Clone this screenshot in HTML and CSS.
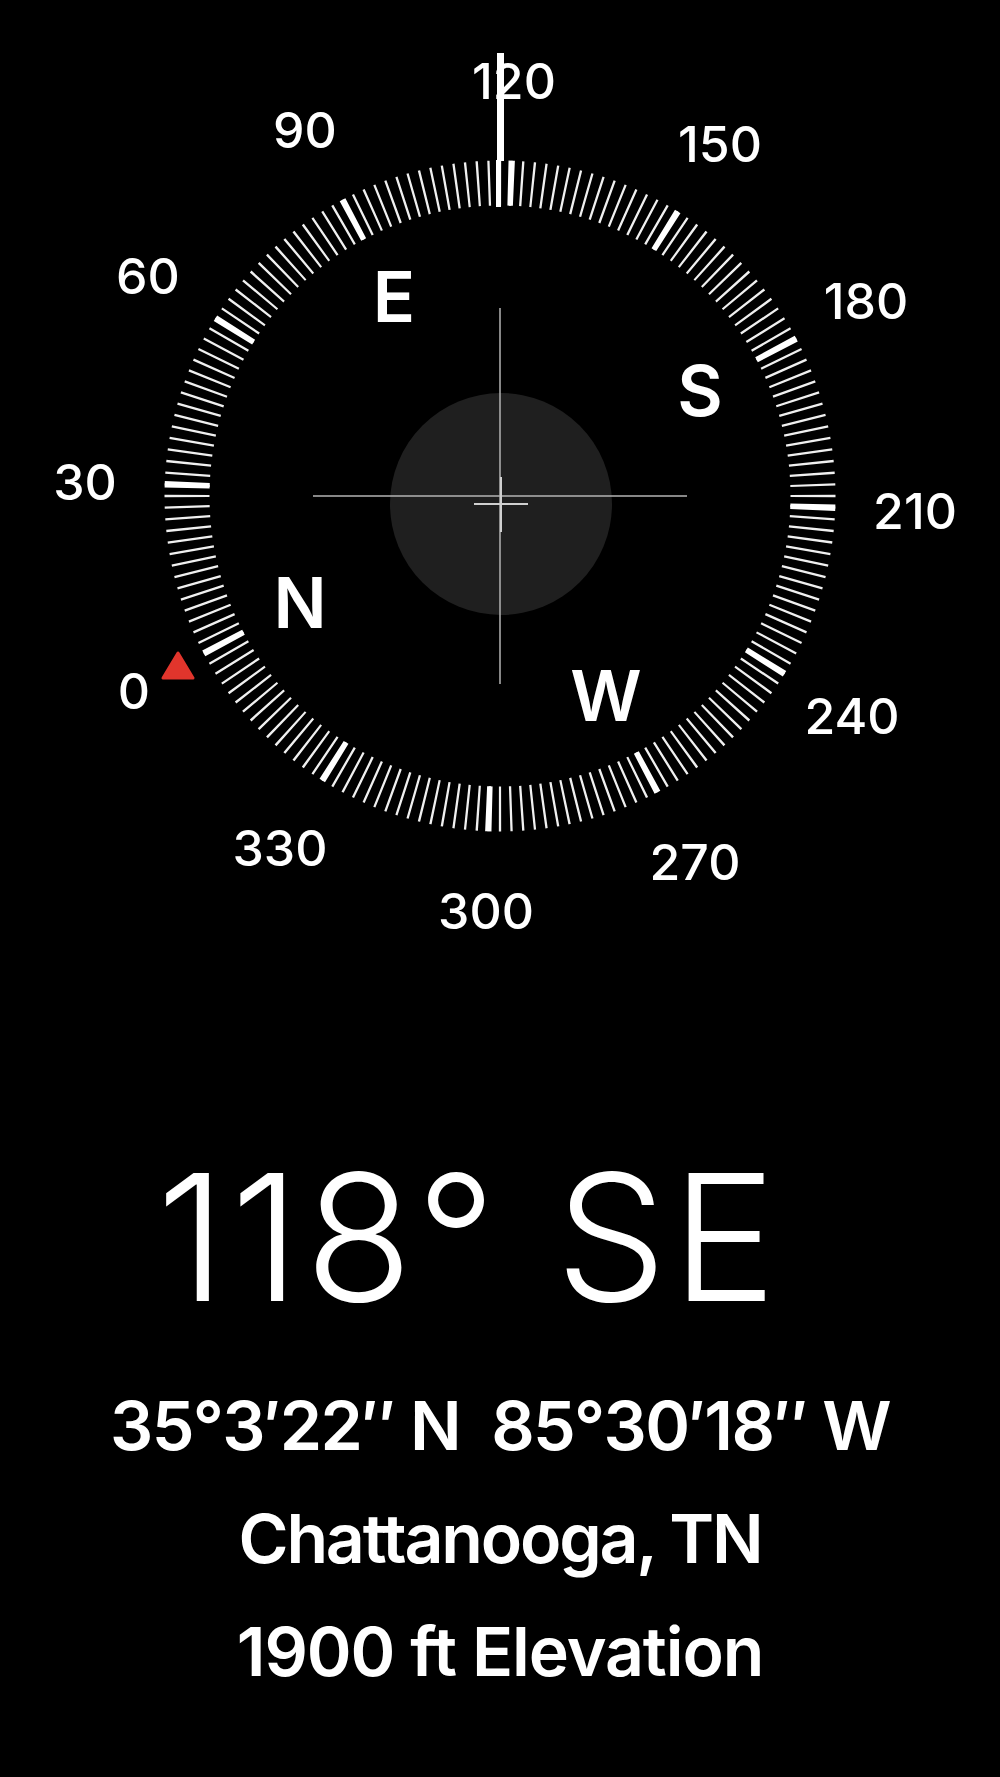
FILE: index.html
```html
<!DOCTYPE html>
<html>

<head>
    <meta charset="UTF-8">
    <meta name="viewport" content="width=device-width, initial-scale=1.0">
    <title>Compass</title>
    <link rel="stylesheet" href="styles.css">
</head>

<body>
    <main class="compass">
        <svg class="dial" width="1000" height="960" viewBox="0 0 1000 960">
            <!-- level bubble -->
            <circle class="bubble" cx="501" cy="504" r="111"></circle>

            <!-- tick ring: 2deg minor, 30deg major (dial turned to 118deg) -->
            <circle class="ticks-minor" cx="500" cy="496" r="313" pathLength="360"></circle>
            <circle class="ticks-major" cx="500" cy="496" r="313" pathLength="360" transform="rotate(2 500 496)"></circle>

            <!-- crosshair -->
            <line class="cross" x1="313" y1="496" x2="687" y2="496"></line>
            <line class="cross" x1="500" y1="308" x2="500" y2="684"></line>
            <line class="cross-small" x1="474" y1="504" x2="528" y2="504"></line>
            <line class="cross-small" x1="501" y1="477" x2="501" y2="532"></line>

            <!-- degree labels -->
            <g class="degrees">
                <text x="134" y="709">0</text>
                <text x="85" y="500">30</text>
                <text x="148" y="294">60</text>
                <text x="305" y="148">90</text>
                <text x="514" y="99">120</text>
                <text x="720" y="162">150</text>
                <text x="866" y="319">180</text>
                <text x="915" y="529">210</text>
                <text x="852" y="734">240</text>
                <text x="695" y="880">270</text>
                <text x="486" y="929">300</text>
                <text x="280" y="866">330</text>
            </g>

            <!-- cardinal points -->
            <g class="cardinals">
                <text x="300" y="628">N</text>
                <text x="394" y="322">E</text>
                <text x="700" y="416">S</text>
                <text x="606" y="721">W</text>
            </g>

            <!-- north marker -->
            <polygon class="north" points="178,653 163,678 193,678"></polygon>

            <!-- fixed heading indicator -->
            <rect class="indicator" x="497" y="53" width="7" height="108"></rect>
            <rect class="indicator" x="496" y="160" width="5" height="47"></rect>
        </svg>

        <section class="readout">
            <div class="heading">118° SE</div>
            <div class="coords">35°3′22″ N&nbsp;&nbsp;85°30′18″ W</div>
            <div class="place">Chattanooga, TN</div>
            <div class="elevation">1900 ft Elevation</div>
        </section>
    </main>
</body>

</html>
```

FILE: styles.css
```css
* {
    margin: 0;
    padding: 0;
}

body {
    background: #000;
    color: #fff;
    font-family: Inter, "Liberation Sans", sans-serif;
}

.dial {
    display: block;
}

.bubble {
    fill: #1f1f1f;
}

.ticks-minor {
    fill: none;
    stroke: #f0f0f0;
    stroke-width: 45;
    stroke-dasharray: 0.42 1.58;
    stroke-dashoffset: 0.21;
}

.ticks-major {
    fill: none;
    stroke: #fff;
    stroke-width: 45;
    stroke-dasharray: 1.1 28.9;
    stroke-dashoffset: 0.55;
}

.cross {
    stroke: #b5b5b5;
    stroke-width: 1.5;
}

.cross-small {
    stroke: #d0d0d0;
    stroke-width: 2;
}

.degrees text {
    fill: #fff;
    font-family: Inter, "Liberation Sans", sans-serif;
    font-size: 50px;
    font-weight: 500;
    text-anchor: middle;
}

.cardinals text {
    fill: #fff;
    font-family: Inter, "Liberation Sans", sans-serif;
    font-size: 70px;
    font-weight: 600;
    text-anchor: middle;
}

.north {
    fill: #e1352c;
    stroke: #e1352c;
    stroke-width: 3;
    stroke-linejoin: round;
}

.indicator {
    fill: #fff;
}

.readout {
    display: flex;
    flex-direction: column;
    align-items: center;
}

.heading {
    font-size: 176px;
    font-weight: 300;
    line-height: 1;
    letter-spacing: 5px;
    margin-top: 189px;
    margin-right: 62px;
}

.coords,
.place,
.elevation {
    font-size: 68px;
    font-weight: 600;
    line-height: 1;
    letter-spacing: -1.6px;
    white-space: nowrap;
}

.coords {
    margin-top: 66px;
}

.place {
    letter-spacing: -2.2px;
}

.elevation {
    letter-spacing: -1.1px;
}

.place,
.elevation {
    margin-top: 45px;
}
```
